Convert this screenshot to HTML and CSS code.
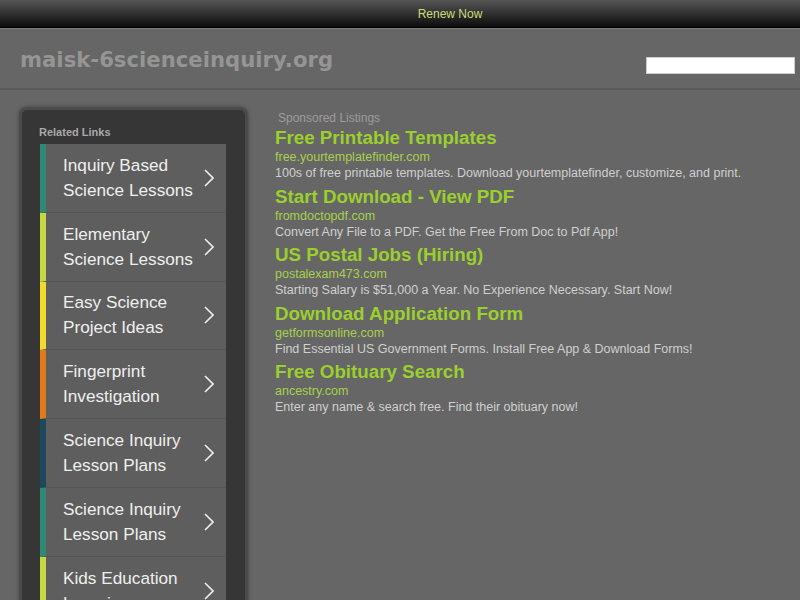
FILE: index.html
```html
<!DOCTYPE html>
<html>
<head>
<meta charset="utf-8">
<link rel="stylesheet" href="styles.css">
</head>
<body>
<div class="topbar"><a class="renew" href="#">Renew Now</a></div>
<div class="header">
  <div class="site">maisk-6scienceinquiry.org</div>
  <input class="search" type="text">
</div>
<div class="main">
  <div class="sidebar">
    <div class="label">Related Links</div>
    <ul class="links">
      <li class="item c1"><span class="txt">Inquiry Based<br>Science Lessons</span><svg class="chev" viewBox="0 0 10 18"><path d="M1 1 L9 9 L1 17" /></svg></li>
      <li class="item c2"><span class="txt">Elementary<br>Science Lessons</span><svg class="chev" viewBox="0 0 10 18"><path d="M1 1 L9 9 L1 17" /></svg></li>
      <li class="item c3"><span class="txt">Easy Science<br>Project Ideas</span><svg class="chev" viewBox="0 0 10 18"><path d="M1 1 L9 9 L1 17" /></svg></li>
      <li class="item c4"><span class="txt">Fingerprint<br>Investigation</span><svg class="chev" viewBox="0 0 10 18"><path d="M1 1 L9 9 L1 17" /></svg></li>
      <li class="item c5"><span class="txt">Science Inquiry<br>Lesson Plans</span><svg class="chev" viewBox="0 0 10 18"><path d="M1 1 L9 9 L1 17" /></svg></li>
      <li class="item c1"><span class="txt">Science Inquiry<br>Lesson Plans</span><svg class="chev" viewBox="0 0 10 18"><path d="M1 1 L9 9 L1 17" /></svg></li>
      <li class="item c2"><span class="txt">Kids Education<br>Learning</span><svg class="chev" viewBox="0 0 10 18"><path d="M1 1 L9 9 L1 17" /></svg></li>
    </ul>
  </div>
  <div class="ads">
    <div class="sponsored">Sponsored Listings</div>
    <div class="ad">
      <a class="ad-title" href="#">Free Printable Templates</a>
      <div class="ad-domain">free.yourtemplatefinder.com</div>
      <div class="ad-desc">100s of free printable templates. Download yourtemplatefinder, customize, and print.</div>
    </div>
    <div class="ad">
      <a class="ad-title" href="#">Start Download - View PDF</a>
      <div class="ad-domain">fromdoctopdf.com</div>
      <div class="ad-desc">Convert Any File to a PDF. Get the Free From Doc to Pdf App!</div>
    </div>
    <div class="ad">
      <a class="ad-title" href="#">US Postal Jobs (Hiring)</a>
      <div class="ad-domain">postalexam473.com</div>
      <div class="ad-desc">Starting Salary is $51,000 a Year. No Experience Necessary. Start Now!</div>
    </div>
    <div class="ad">
      <a class="ad-title" href="#">Download Application Form</a>
      <div class="ad-domain">getformsonline.com</div>
      <div class="ad-desc">Find Essential US Government Forms. Install Free App &amp; Download Forms!</div>
    </div>
    <div class="ad">
      <a class="ad-title" href="#">Free Obituary Search</a>
      <div class="ad-domain">ancestry.com</div>
      <div class="ad-desc">Enter any name &amp; search free. Find their obituary now!</div>
    </div>
  </div>
</div>
</body>
</html>
```
FILE: styles.css
```css
html, body {
  margin: 0;
  padding: 0;
  background: #666666;
  font-family: "Liberation Sans", Arial, sans-serif;
  height: 100%;
  overflow: hidden;
}
.topbar {
  height: 27px;
  background: linear-gradient(#565656, #0c0c0c);
  border-bottom: 1px solid #000;
  box-shadow: 0 1px 0 #7c7c7c;
  display: flex;
  align-items: center;
  justify-content: center;
  padding-left: 100px;
}
.renew {
  color: #c9dc78;
  font-size: 12px;
  text-decoration: none;
}
.header {
  margin-top: 1px;
  height: 59px;
  display: flex;
  align-items: center;
  justify-content: space-between;
  padding: 0 5px 0 20px;
  border-bottom: 2px solid #5a5a5a;
}
.site {
  font-family: "DejaVu Sans", Verdana, sans-serif;
  font-weight: bold;
  font-size: 21.2px;
  color: #959595;
  margin-top: 1px;
}
.search {
  width: 147px;
  height: 15px;
  margin: 14px 0 0 0;
  padding: 0;
  border: 1px solid #cfcfcf;
  background: #fff;
}
.main {
  display: flex;
  align-items: flex-start;
}
.sidebar {
  margin: 17px 0 0 19px;
  width: 186px;
  border: 3px solid #4b4b4b;
  border-radius: 8px;
  background: #363636;
  box-shadow: 0 0 4px rgba(0,0,0,0.35);
  padding: 15px 19px 40px 18px;
  min-height: 600px;
}
.label {
  font-size: 11px;
  font-weight: bold;
  color: #a9a9a9;
  line-height: 14px;
  margin-bottom: 5px;
  margin-left: -1px;
}
.links {
  list-style: none;
  margin: 0;
  padding: 0;
}
.item {
  height: 67.8px;
  border-bottom: 1px solid #555555;
  border-left: 6px solid #2f8a74;
  background: #5e5e5e;
  display: flex;
  align-items: center;
  justify-content: space-between;
  padding: 0 12px 0 17px;
  box-sizing: content-box;
}
.c1 { border-left-color: #2f8a74; }
.c2 { border-left-color: #c4d844; }
.c3 { border-left-color: #f0da2e; }
.c4 { border-left-color: #e2791e; }
.c5 { border-left-color: #1c4a5a; }
.txt {
  font-size: 17.2px;
  line-height: 25px;
  color: #efefef;
}
.chev {
  width: 10px;
  height: 18px;
  flex: none;
}
.chev path {
  fill: none;
  stroke: #eeeeee;
  stroke-width: 1.6;
}
.ads {
  margin-left: 27px;
  padding-top: 21px;
}
.sponsored {
  font-size: 12px;
  line-height: 14px;
  color: #9c9c9c;
  margin-left: 3px;
  margin-bottom: 2px;
}
.ad {
  margin-bottom: 4.5px;
}
.ad-title {
  display: block;
  font-size: 18.75px;
  font-weight: bold;
  line-height: 22px;
  color: #9bcf2e;
  text-decoration: none;
}
.ad-domain {
  font-size: 12.5px;
  line-height: 16px;
  color: #a8d04a;
}
.ad-desc {
  font-size: 12.5px;
  line-height: 16px;
  color: #cfcfcf;
}
```
